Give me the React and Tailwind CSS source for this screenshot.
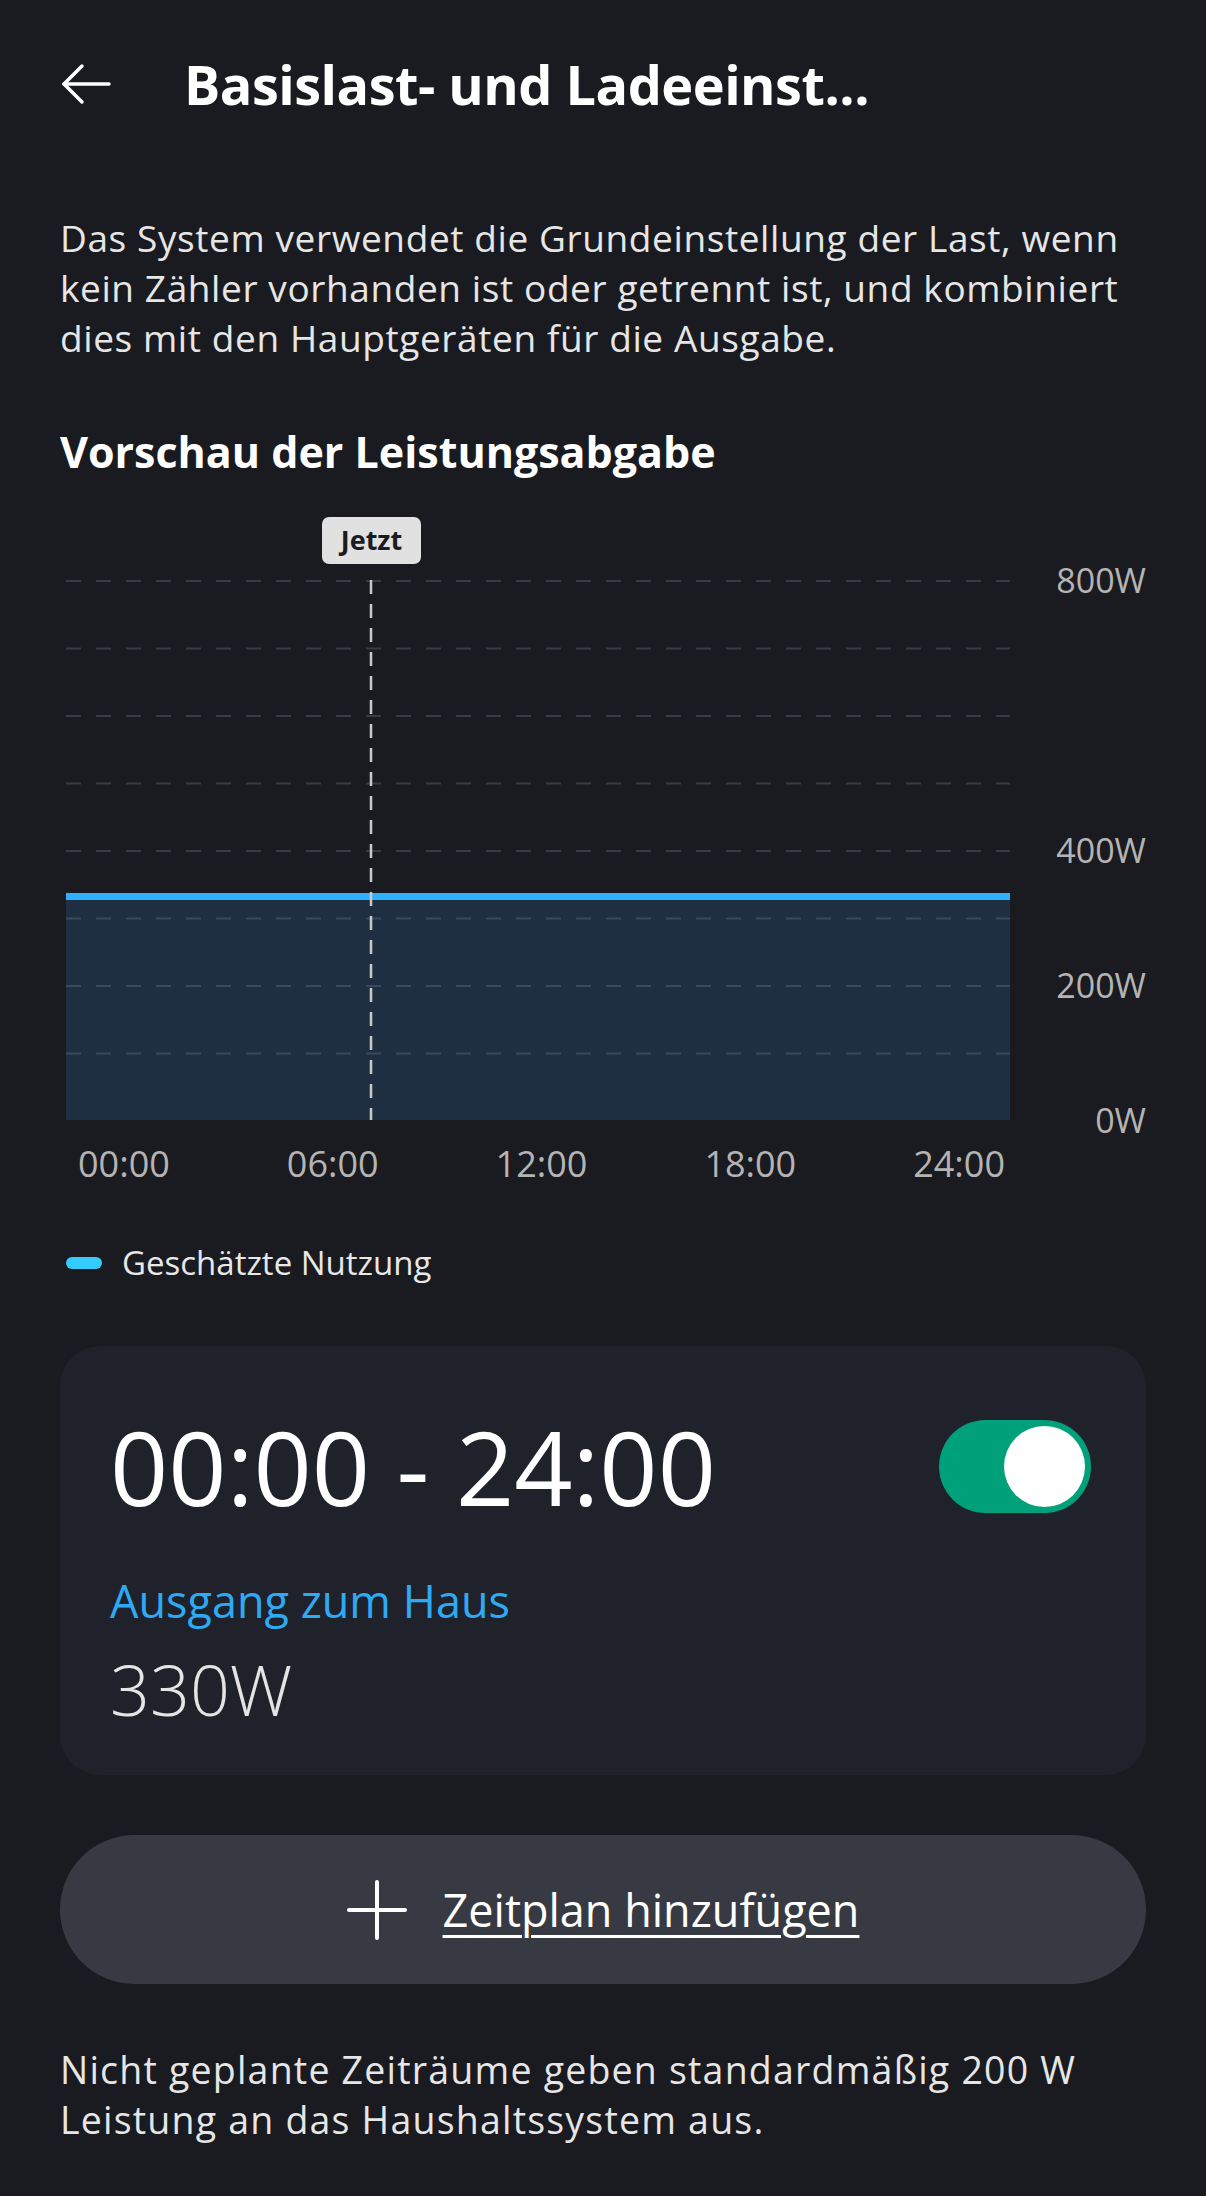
import React from "react";

const font = { fontFamily: "'Open Sans', Lato, sans-serif" };

function BackArrow() {
  return (
    <svg width="52" height="44" viewBox="0 0 52 44" fill="none" stroke="#fff" strokeWidth="3.5" strokeLinecap="round" strokeLinejoin="round">
      <path d="M49 22H4" />
      <path d="M22 4L4 22l18 18" />
    </svg>
  );
}

function PlusIcon() {
  return (
    <svg width="60" height="60" viewBox="0 0 60 60" fill="none" stroke="#fff" strokeWidth="4" strokeLinecap="round">
      <path d="M30 2v56" />
      <path d="M2 30h56" />
    </svg>
  );
}

function Chart() {
  const grid = [0, 67.5, 135, 202.5, 270, 337.5, 405, 472.5];
  const lineY = 316.5;
  return (
    <div>
      <div className="relative h-[63px]">
        <div className="absolute left-[262px] top-0 flex h-[47px] w-[99px] items-center justify-center rounded-[7px] bg-[#e1e1e1] text-[27px] font-bold text-[#1b1c20]">
          Jetzt
        </div>
      </div>
      <div className="flex">
        <svg width="950" height="540" viewBox="0 0 950 540" className="shrink-0">
          <rect x="6" y={lineY} width="944" height={540 - lineY} fill="#1e2f42" />
          {grid.map((y) => (
            <line key={y} x1="6" x2="950" y1={y + 1} y2={y + 1} stroke={y > lineY ? "#394a5c" : "#3a3c43"} strokeWidth="2" strokeDasharray="15 15" />
          ))}
          <line x1="6" x2="950" y1={lineY} y2={lineY} stroke="#2fb0ff" strokeWidth="7" />
          <line x1="311" x2="311" y1="0" y2="540" stroke="#c9c9c9" strokeWidth="2.5" strokeDasharray="14 10" />
        </svg>
        <div className="relative h-[540px] flex-1 text-[34px] text-[#b4b4b4]">
          <span className="absolute right-0 top-[-22px] leading-[44px]">800W</span>
          <span className="absolute right-0 top-[248px] leading-[44px]">400W</span>
          <span className="absolute right-0 top-[383px] leading-[44px]">200W</span>
          <span className="absolute right-0 top-[518px] leading-[44px]">0W</span>
        </div>
      </div>
      <div className="mt-[24px] flex w-[950px] justify-between pl-[18px] pr-[5px] text-[36px] leading-[40px] text-[#b4b4b4]">
        <span>00:00</span>
        <span>06:00</span>
        <span>12:00</span>
        <span>18:00</span>
        <span>24:00</span>
      </div>
      <div className="mt-[59px] flex items-center gap-[20px] pl-[6px]">
        <span className="h-[12px] w-[36px] rounded-full bg-[#33ccff]" />
        <span className="text-[33px] leading-[40px] text-[#e8e8e8]">Geschätzte Nutzung</span>
      </div>
    </div>
  );
}

export default function App() {
  return (
    <div className="min-h-[2196px] w-[1206px] bg-[#1a1b20] px-[60px] text-white" style={font}>
      <header className="flex h-[170px] items-center gap-[72px] pb-[2px]">
        <BackArrow />
        <h1 className="text-[54px] font-bold leading-none tracking-[-0.5px]">Basislast- und Ladeeinst...</h1>
      </header>

      <p className="mt-[43px] text-[37px] leading-[50px] tracking-[0.6px] text-[#e6e6e6]">
        Das System verwendet die Grundeinstellung der Last, wenn
        <br />
        kein Zähler vorhanden ist oder getrennt ist, und kombiniert
        <br />
        dies mit den Hauptgeräten für die Ausgabe.
      </p>

      <h2 className="mt-[61px] text-[43px] font-bold leading-[56px]">Vorschau der Leistungsabgabe</h2>

      <div className="mt-[37px]">
        <Chart />
      </div>

      <section className="mt-[63px] rounded-[40px] bg-[#1f222b] pb-[46px] pl-[50px] pr-[55px] pt-[74px]">
        <div className="flex h-[93px] items-center justify-between">
          <span className="text-[102px] font-medium leading-none">00:00 - 24:00</span>
          <div className="flex h-[93px] w-[152px] items-center justify-end rounded-full bg-[#00a07a] pr-[6px]">
            <span className="h-[81px] w-[81px] rounded-full bg-white" />
          </div>
        </div>
        <div className="mt-[60px] text-[45px] leading-[56px] text-[#2eaaf5]">Ausgang zum Haus</div>
        <div className="mt-[20px] text-[70px] font-light leading-[80px] text-[#e4e4e4]">330W</div>
      </section>

      <button className="mt-[60px] flex h-[149px] w-full items-center justify-center gap-[36px] rounded-full bg-[#373a42]">
        <PlusIcon />
        <span className="text-[45px] font-medium text-white underline decoration-[3px] underline-offset-[8px]">Zeitplan hinzufügen</span>
      </button>

      <p className="mt-[61px] text-[37.5px] leading-[50px] tracking-[1.2px] text-[#e6e6e6]">
        Nicht geplante Zeiträume geben standardmäßig 200 W
        <br />
        Leistung an das Haushaltssystem aus.
      </p>
    </div>
  );
}
